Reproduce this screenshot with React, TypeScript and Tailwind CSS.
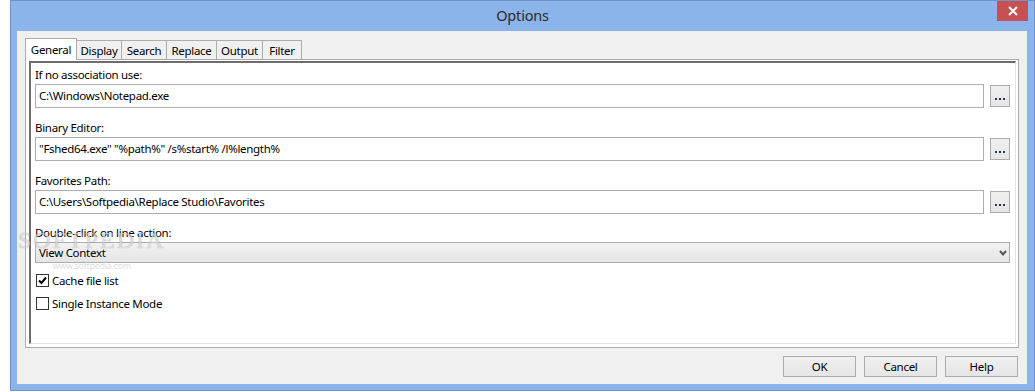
import React from 'react';

const tabs = [
  { label: 'General', w: 'w-[52px]' },
  { label: 'Display', w: 'w-[45px]' },
  { label: 'Search', w: 'w-[45px]' },
  { label: 'Replace', w: 'w-[50px]' },
  { label: 'Output', w: 'w-[46px]' },
  { label: 'Filter', w: 'w-[39px]' },
];

function PathField({ label, value, first }: { label: string; value: string; first?: boolean }) {
  return (
    <div className={first ? '' : 'mt-[12px]'}>
      <div className="h-[15px] leading-[15px] mb-[2px]">{label}</div>
      <div className="flex items-center">
        <div className="flex-1 h-[24px] border border-[#abadb3] bg-white flex items-center pl-[3px] whitespace-pre">
          {value}
        </div>
        <button className="ml-[6px] w-[20px] h-[22px] border border-[#acacac] bg-gradient-to-b from-[#f0f0f0] to-[#e5e5e5] flex items-end justify-center pb-[6px]">
          <span className="flex gap-[2px]">
            <span className="w-[2px] h-[2px] bg-[#1a3a6a]" />
            <span className="w-[2px] h-[2px] bg-[#3a2a10]" />
            <span className="w-[2px] h-[2px] bg-[#1a3a6a]" />
          </span>
        </button>
      </div>
    </div>
  );
}

function Checkbox({ label, checked }: { label: string; checked?: boolean }) {
  return (
    <div className="flex items-center h-[13px]">
      <div className="w-[13px] h-[13px] border border-[#333] bg-white flex items-center justify-center">
        {checked && (
          <svg width="9" height="9" viewBox="0 0 9 9">
            <path d="M1 4.5 L3.5 7 L8 1.5" stroke="#000" strokeWidth="2" fill="none" />
          </svg>
        )}
      </div>
      <span className="ml-[3px] leading-[13px]">{label}</span>
    </div>
  );
}

export default function App() {
  return (
    <div className="relative w-[1035px] h-[392px] bg-white overflow-hidden font-['Noto_Sans',sans-serif] text-[11.5px] tracking-[-0.3px] text-black">
      <div className="ml-[10px] w-[1025px] h-[391px] border border-[#6f92c8] bg-[#8bb4ec] flex flex-col">
        {/* title bar */}
        <div className="relative h-[30px] flex items-center justify-center">
          <span className="text-[14.5px] tracking-[-0.2px] text-[#2b2b2b] -mt-[1px]">Options</span>
          <div className="absolute right-[6px] top-0 w-[31px] h-[20px] bg-[#c75050] flex items-center justify-center">
            <svg width="10" height="10" viewBox="0 0 10 10">
              <path d="M1 1 L9 9 M9 1 L1 9" stroke="#fff" strokeWidth="2" />
            </svg>
          </div>
        </div>

        {/* client */}
        <div className="ml-[6px] mr-[7px] h-[353px] bg-[#f0f0f0] flex flex-col px-[8px] pt-[7px]">
          {/* tab strip */}
          <div className="flex items-end h-[21px] relative z-10">
            {tabs.map((t, i) => (
              <div
                key={t.label}
                className={
                  i === 0
                    ? `${t.w} h-[22px] -mb-[1px] border border-b-0 border-[#adadad] bg-white flex items-start justify-center pt-[2px]`
                    : `${t.w} h-[19px] border border-l-0 border-b-0 border-[#adadad] bg-[#f0f0f0] flex items-start justify-center pt-[1px]`
                }
              >
                {t.label}
              </div>
            ))}
          </div>

          {/* panel */}
          <div className="h-[289px] border border-[#adadad] bg-white pt-[1px] pl-[3px] pr-[2px] pb-[3px]">
            <div className="h-full border-l-2 border-t-2 border-l-[#6d6d6d] border-t-[#6d6d6d] border-r border-b border-r-[#e3e3e3] border-b-[#e3e3e3] pl-[4px] pr-[5px] pt-[4px]">
              <PathField first label="If no association use:" value="C:\Windows\Notepad.exe" />
              <PathField label="Binary Editor:" value={'"Fshed64.exe" "%path%" /s%start% /l%length%'} />
              <PathField label="Favorites Path:" value="C:\Users\Softpedia\Replace Studio\Favorites" />

              <div className="mt-[11px]">
                <div className="h-[15px] leading-[15px] mb-[2px]">Double-click on line action:</div>
                <div className="h-[21px] border border-[#acacac] bg-gradient-to-b from-[#f2f2f2] to-[#e5e5e5] flex items-center justify-between pl-[3px] pr-[2px]">
                  <span>View Context</span>
                  <svg width="8" height="6" viewBox="0 0 8 6">
                    <path d="M1 1 L4 4.5 L7 1" stroke="#555" strokeWidth="2" fill="none" />
                  </svg>
                </div>
              </div>

              <div className="mt-[11px] ml-[1px] flex flex-col gap-[10px]">
                <Checkbox checked label="Cache file list" />
                <Checkbox label="Single Instance Mode" />
              </div>
            </div>
          </div>

          {/* buttons */}
          <div className="flex justify-end gap-[8px] mt-[8px] pr-[1px]">
            {['OK', 'Cancel', 'Help'].map((b) => (
              <button
                key={b}
                className="w-[73px] h-[21px] border border-[#acacac] bg-gradient-to-b from-[#f0f0f0] to-[#e5e5e5] flex items-center justify-center"
              >
                {b}
              </button>
            ))}
          </div>
        </div>
      </div>

      {/* watermark */}
      <div className="absolute left-[18px] top-[228px] pointer-events-none select-none text-center">
        <div className="font-['Liberation_Serif',serif] text-[24px] leading-[24px] tracking-[2px] text-white/60 [text-shadow:0_0_1px_rgba(0,0,0,0.35)]">
          SOFTPEDIA
        </div>
        <div className="text-[9px] leading-[10px] mt-[9px] text-[#ccc]/70">www.softpedia.com</div>
      </div>
    </div>
  );
}
